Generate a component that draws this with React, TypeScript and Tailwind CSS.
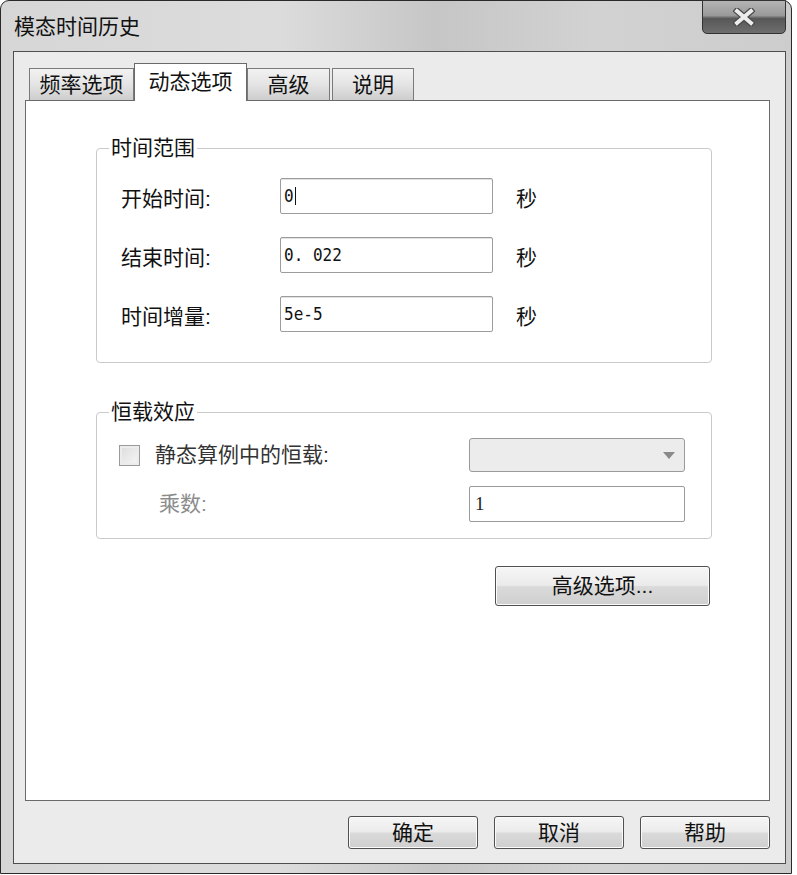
const cjk = "font-['Liberation_Sans','Noto_Sans_CJK_SC',sans-serif]";

function Tab({ label, active, width }: { label: string; active?: boolean; width: string }) {
  if (active) {
    return (
      <div
        className={`${width} h-[38px] -mb-px z-10 bg-white border border-b-0 border-[#6a6a6a] flex items-center justify-center text-[21px] leading-[22px] text-[#111] pb-[2px]`}
      >
        {label}
      </div>
    );
  }
  return (
    <div
      className={`${width} h-[32px] border border-b-0 border-[#7a7a7a] bg-[linear-gradient(#f2f2f2,#e4e4e4_50%,#cdcdcd)] flex items-center justify-center text-[21px] leading-[22px] text-[#111]`}
    >
      {label}
    </div>
  );
}

function TimeRow({ label, value, caret }: { label: string; value: string; caret?: boolean }) {
  return (
    <div className="flex items-center h-[36px]">
      <span className="w-[159px] text-[21px] leading-[22px] text-[#111] mt-[6px]">{label}</span>
      <div className="w-[213px] h-[36px] border border-[#9c9c9c] rounded-[2px] bg-white flex items-center pl-[3px] shadow-[inset_0_1px_0_#e2e2e2]">
        <span className="font-['DejaVu_Sans_Mono',monospace] text-[16px] leading-[18px] text-[#111] scale-y-110">{value}</span>
        {caret && <span className="w-px h-[18px] bg-[#111] ml-px" />}
      </div>
      <span className="ml-[23px] text-[21px] leading-[22px] text-[#111] mt-[6px]">秒</span>
    </div>
  );
}

function Button({ label, width, height }: { label: string; width: string; height: string }) {
  return (
    <div
      className={`${width} ${height} border border-[#505050] rounded-[3px] bg-[linear-gradient(#f6f6f6,#ebebeb_48%,#dadada_52%,#cfcfcf)] shadow-[inset_0_0_0_1px_#fbfbfb] flex items-center justify-center text-[21px] leading-[22px] text-[#111]`}
    >
      {label}
    </div>
  );
}

export default function App() {
  return (
    <div className={`w-[797px] h-[875px] bg-white ${cjk}`}>
      <div className="w-[792px] h-[874px] flex flex-col rounded-t-[9px] border border-[#2a2a2a] bg-[linear-gradient(90deg,#d6d6d6,#dcdcdc_35%,#c6c6c6_55%,#d2d2d2_75%,#cdcdcd)]">
        {/* title bar */}
        <div className="relative h-[50px] flex items-center pl-[13px]">
          <span className="text-[21px] leading-[22px] text-[#111] mt-[1px]">模态时间历史</span>
          <div className="absolute right-[5px] top-[-1px] w-[84px] h-[34px] rounded-b-[5px] border border-[#333] bg-[linear-gradient(#b4b4b4,#9a9a9a_45%,#575757_55%,#6e6e6e)] flex items-center justify-center">
            <svg width="22" height="18" viewBox="0 0 22 18">
              <path d="M4 3 L18 15 M18 3 L4 15" stroke="#4a4a4a" strokeWidth="6.5" strokeLinecap="square" />
              <path d="M4 3 L18 15 M18 3 L4 15" stroke="#ececec" strokeWidth="4" strokeLinecap="square" />
            </svg>
          </div>
        </div>

        {/* client area */}
        <div className="flex-1 ml-[12px] mr-[5px] mb-[9px] border border-[#4e4e4e] bg-[#ebebeb] flex flex-col pt-[11px] pl-[11px] pr-[15px] pb-[14px]">
          <div className="flex items-end h-[37px] pl-[4px]">
            <Tab label="频率选项" width="w-[105px]" />
            <Tab label="动态选项" width="w-[113px]" active />
            <Tab label="高级" width="w-[83px]" />
            <div className="w-[2px]" />
            <Tab label="说明" width="w-[82px]" />
          </div>

          <div className="flex-1 bg-white border border-[#6a6a6a] pl-[70px] pr-[57px]">
            <fieldset className="mt-[36px] border border-[#cacaca] rounded-[4px] pl-[24px] pb-[30px]">
              <legend className="-ml-[12px] px-[2px] text-[21px] leading-[22px] text-[#111]">时间范围</legend>
              <div className="flex flex-col gap-[23px] pt-[19px]">
                <TimeRow label="开始时间:" value="0" caret />
                <TimeRow label="结束时间:" value="0. 022" />
                <TimeRow label="时间增量:" value="5e-5" />
              </div>
            </fieldset>

            <fieldset className="mt-[38px] border border-[#cacaca] rounded-[4px] pl-[22px] pr-[26px] pb-[16px]">
              <legend className="-ml-[10px] px-[2px] text-[21px] leading-[22px] text-[#111]">恒载效应</legend>
              <div className="pt-[15px] flex items-center h-[49px]">
                <div className="w-[21px] h-[21px] border border-[#9a9a9a] bg-[linear-gradient(135deg,#dcdcdc,#f6f6f6)] shadow-[inset_0_0_0_2px_#ececec]" />
                <span className="ml-[15px] text-[21px] leading-[22px] text-[#333]">静态算例中的恒载:</span>
                <div className="ml-auto w-[216px] h-[34px] border border-[#9a9a9a] rounded-[3px] bg-[#ececec] flex items-center justify-end pr-[9px]">
                  <svg width="12" height="7" viewBox="0 0 12 7">
                    <path d="M0 0 L12 0 L6 7 Z" fill="#8a8a8a" />
                  </svg>
                </div>
              </div>
              <div className="mt-[14px] flex items-center h-[36px]">
                <span className="ml-[40px] text-[21px] leading-[22px] text-[#8c8c8c]">乘数:</span>
                <div className="ml-auto w-[216px] h-[36px] border border-[#9a9a9a] rounded-[2px] bg-white flex items-center pl-[5px]">
                  <span className="font-['Liberation_Serif',serif] text-[19px] leading-[20px] text-[#222]">1</span>
                </div>
              </div>
            </fieldset>

            <div className="flex justify-end mt-[27px] mr-[2px]">
              <Button label="高级选项..." width="w-[215px]" height="h-[40px]" />
            </div>
          </div>

          <div className="flex justify-end gap-[16px] mt-[15px] h-[33px]">
            <Button label="确定" width="w-[130px]" height="h-[33px]" />
            <Button label="取消" width="w-[130px]" height="h-[33px]" />
            <Button label="帮助" width="w-[130px]" height="h-[33px]" />
          </div>
        </div>
      </div>
    </div>
  );
}
